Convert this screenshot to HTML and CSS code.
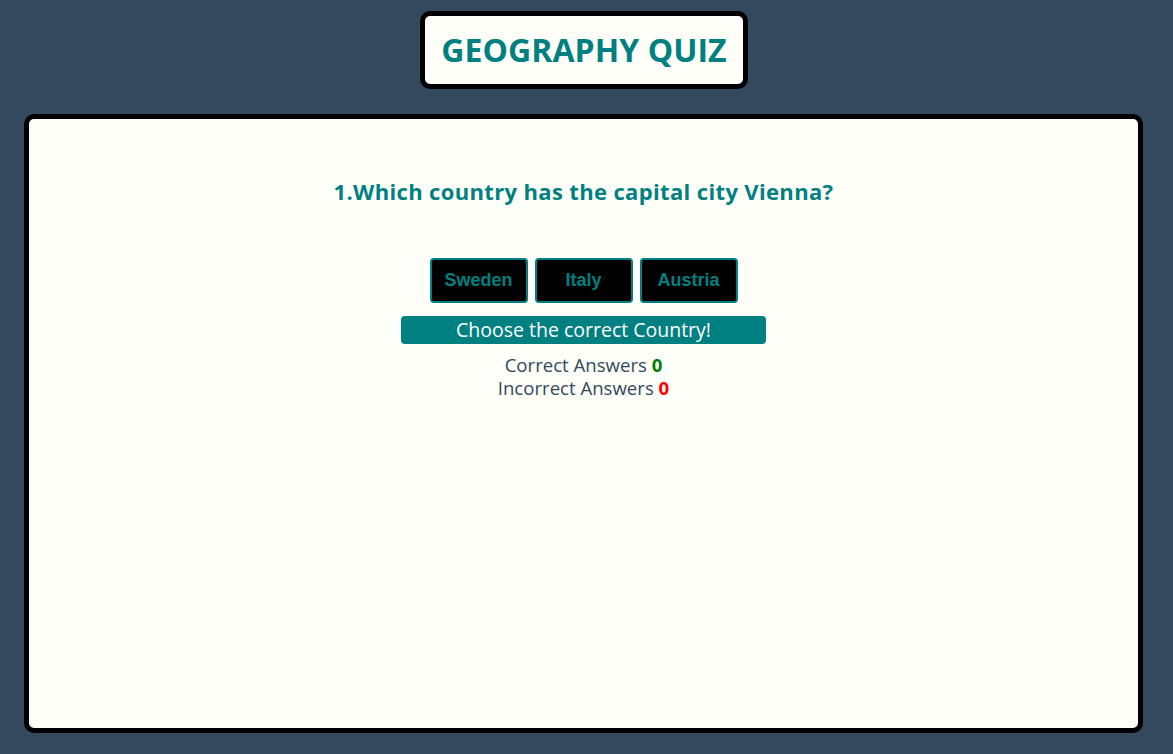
FILE: index.html
```html
<!DOCTYPE html>
<html lang="en">
<head>
<meta charset="utf-8">
<title>Geography Quiz</title>
<link rel="stylesheet" href="styles.css">
</head>
<body>
  <header class="top">
    <div class="title-box">
      <h1 class="title">GEOGRAPHY QUIZ</h1>
    </div>
  </header>
  <main class="card">
    <h2 class="question">1.Which country has the capital city Vienna?</h2>
    <div class="answers">
      <button class="answer">Sweden</button>
      <button class="answer">Italy</button>
      <button class="answer">Austria</button>
    </div>
    <div class="status">Choose the correct Country!</div>
    <div class="scores">
      <div class="score">Correct Answers <span class="num good">0</span></div>
      <div class="score">Incorrect Answers <span class="num bad">0</span></div>
    </div>
  </main>
</body>
</html>
```
FILE: styles.css
```css
html, body {
  margin: 0;
  padding: 0;
}
body {
  background: #34495e;
  font-family: "Open Sans", "Noto Sans", sans-serif;
  height: 754px;
  overflow: hidden;
}
.top {
  display: flex;
  justify-content: center;
  padding: 11px 5px 0 0;
}
.title-box {
  border: 5px solid #000;
  border-radius: 10px;
  background: #fdfff8;
  padding: 0 16px;
  height: 68px;
  display: flex;
  align-items: center;
}
.title {
  margin: 0;
  font-size: 32px;
  font-weight: 700;
  color: #008080;
  line-height: 1;
  letter-spacing: 0.05px;
}
.card {
  margin: 25px 30px 0 24px;
  height: 609px;
  border: 5px solid #000;
  border-radius: 10px;
  background: #fdfff8;
  display: flex;
  flex-direction: column;
  align-items: center;
}
.question {
  margin: 59px 0 0;
  font-size: 22px;
  line-height: 26px;
  font-weight: 700;
  color: #008080;
  letter-spacing: 0.35px;
}
.answers {
  margin-top: 54px;
  display: flex;
  gap: 7px;
}
.answer {
  width: 98px;
  height: 45px;
  background: #000;
  border: 2px solid #008080;
  border-radius: 4px;
  color: #008080;
  font-family: "Liberation Sans", Arial, sans-serif;
  font-weight: 700;
  font-size: 18px;
  padding: 0;
}
.status {
  margin-top: 13px;
  width: 365px;
  height: 28px;
  line-height: 28px;
  background: #008080;
  border-radius: 4px;
  color: #fff;
  font-size: 19.5px;
  text-align: center;
}
.scores {
  margin-top: 9px;
  text-align: center;
  color: #34495e;
  font-size: 18.6px;
  line-height: 23px;
}
.num {
  font-weight: 700;
}
.good { color: #008000; }
.bad { color: #ff0000; }
```
